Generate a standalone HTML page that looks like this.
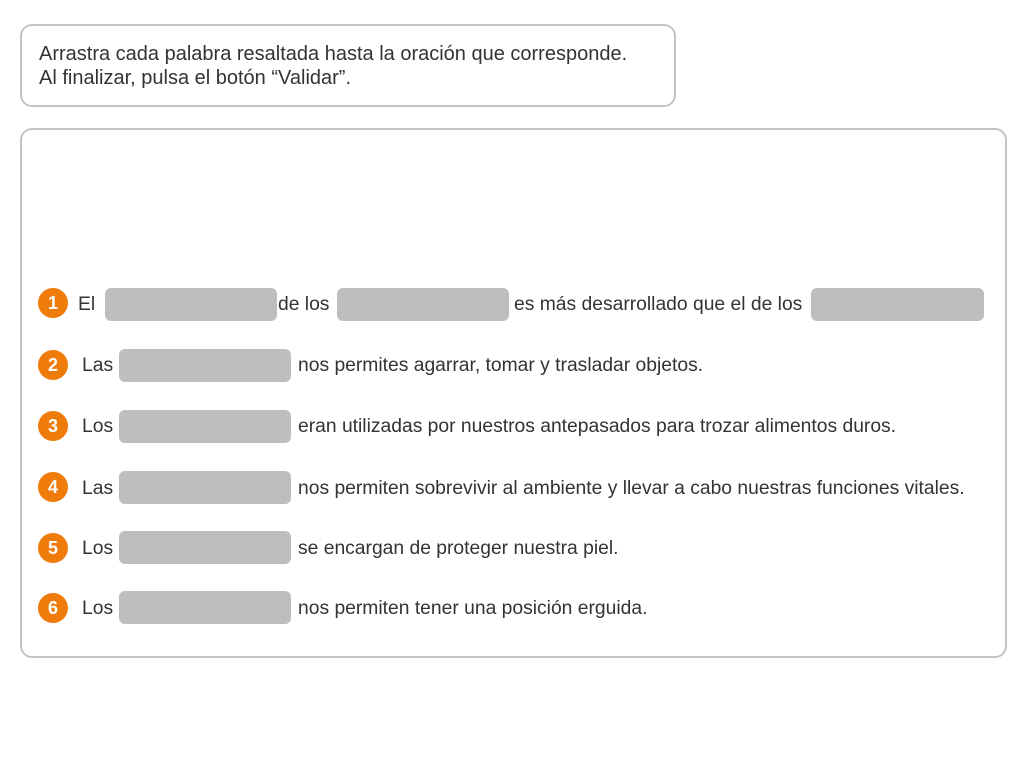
<!DOCTYPE html><html><head><meta charset="utf-8"><style>
body{margin:0;width:1024px;height:768px;background:#fff;font-family:"Liberation Sans",sans-serif;color:#333;position:relative;overflow:hidden}
.a{position:absolute;box-sizing:border-box}
.top{left:20px;top:24px;width:656px;height:83px;border:2px solid #c4c4c4;border-radius:12px;font-size:20px;line-height:24px;padding:16px 0 0 17px;color:#333;white-space:nowrap}
.main{left:20px;top:128px;width:987px;height:530px;border:2px solid #c4c4c4;border-radius:12px}
.n{width:30px;height:30px;border-radius:50%;background:#ef7b0a;color:#fff;font-weight:bold;font-size:18px;text-align:center;line-height:30px}
.b{height:33px;background:#bebebe;border-radius:6px}
.t{font-size:19.3px;line-height:22px;white-space:nowrap;margin-top:2px}
</style></head><body>
<div class="a top">Arrastra cada palabra resaltada hasta la oración que corresponde.<br>Al finalizar, pulsa el botón “Validar”.</div>
<div class="a main"></div>

<div class="a n" style="left:38px;top:288px">1</div>
<div class="a t" style="left:78px;top:292px">El</div>
<div class="a b" style="left:105px;top:288px;width:172px"></div>
<div class="a t" style="left:278px;top:292px">de los</div>
<div class="a b" style="left:337px;top:288px;width:172px"></div>
<div class="a t" style="left:514px;top:292px">es más desarrollado que el de los</div>
<div class="a b" style="left:811px;top:288px;width:173px"></div>

<div class="a n" style="left:38px;top:350px">2</div>
<div class="a t" style="left:82px;top:353px">Las</div>
<div class="a b" style="left:119px;top:349px;width:172px"></div>
<div class="a t" style="left:298px;top:353px">nos permites agarrar, tomar y trasladar objetos.</div>

<div class="a n" style="left:38px;top:411px">3</div>
<div class="a t" style="left:82px;top:414px">Los</div>
<div class="a b" style="left:119px;top:410px;width:172px"></div>
<div class="a t" style="left:298px;top:414px">eran utilizadas por nuestros antepasados para trozar alimentos duros.</div>

<div class="a n" style="left:38px;top:472px">4</div>
<div class="a t" style="left:82px;top:476px">Las</div>
<div class="a b" style="left:119px;top:471px;width:172px"></div>
<div class="a t" style="left:298px;top:476px">nos permiten sobrevivir al ambiente y llevar a cabo nuestras funciones vitales.</div>

<div class="a n" style="left:38px;top:533px">5</div>
<div class="a t" style="left:82px;top:536px">Los</div>
<div class="a b" style="left:119px;top:531px;width:172px"></div>
<div class="a t" style="left:298px;top:536px">se encargan de proteger nuestra piel.</div>

<div class="a n" style="left:38px;top:593px">6</div>
<div class="a t" style="left:82px;top:596px">Los</div>
<div class="a b" style="left:119px;top:591px;width:172px"></div>
<div class="a t" style="left:298px;top:596px">nos permiten tener una posición erguida.</div>
</body></html>
